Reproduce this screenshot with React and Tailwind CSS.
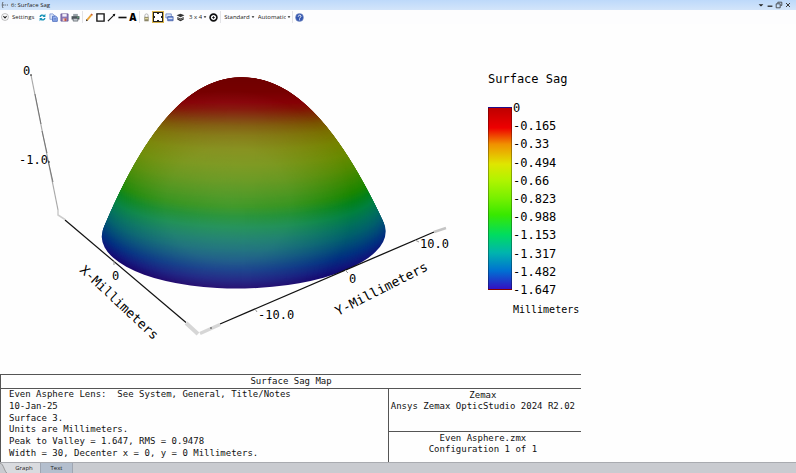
import React from "react";

const MONO = "font-['DejaVu_Sans_Mono','Liberation_Mono',monospace]";

// Colour down the front of the dome, keyed by the height at its centre line.
const RAMP = [
  [76, [110, 0, 0]],
  [92, [118, 0, 0]],
  [103, [134, 0, 6]],
  [110, [130, 18, 4]],
  [118, [124, 50, 4]],
  [126, [122, 82, 0]],
  [136, [122, 110, 0]],
  [150, [118, 130, 0]],
  [165, [106, 138, 0]],
  [180, [84, 138, 0]],
  [195, [54, 136, 0]],
  [207, [28, 134, 0]],
  [217, [4, 130, 26]],
  [228, [0, 128, 64]],
  [240, [0, 112, 92]],
  [250, [0, 96, 108]],
  [260, [0, 74, 120]],
  [270, [2, 48, 128]],
  [280, [16, 24, 124]],
  [290, [26, 0, 104]],
];

function rampColor(y) {
  const i = Math.max(1, RAMP.findIndex(([stop]) => stop >= y));
  const [y0, a] = RAMP[i - 1];
  const [y1, b] = RAMP[i];
  const k = (y - y0) / (y1 - y0);
  return `rgb(${a.map((v, n) => Math.round(v + (b[n] - v) * k)).join(",")})`;
}

// Rings of the surface; their union is the silhouette of the dome.
const RINGS = Array.from({ length: 120 }, (_, i) => {
  const t = 1 - i / 120;
  const r = Math.pow(t, 1 / 2.16);
  return { cy: 83.5 + 150.5 * t, rx: 142 * r, ry: 54.5 * r };
});

// Lines of equal sag: nearly level at the top, bowed like the rim at the base.
const BANDS = Array.from({ length: 212 }, (_, i) => {
  const y = 289 - i;
  const drop = 54 * Math.pow(Math.max(0, y - 96) / 193, 1.2);
  const edge = y - drop;
  const t = Math.max(0.1, Math.min(1, (edge - 73) / 151));
  const half = 146 * Math.sqrt(Math.max(0.02, Math.pow(t, 0.93) - 0.032)) + 4;
  const x0 = 243.7 - half;
  const x1 = 243.7 + half;
  return {
    d: `M0 60V${edge}H${x0}A${half} ${drop + 0.01} 0 0 0 ${x1} ${edge}H480V60Z`,
    fill: rampColor(y),
  };
});

const LEVELS = ["0", "-0.165", "-0.33", "-0.494", "-0.66", "-0.823", "-0.988", "-1.153", "-1.317", "-1.482", "-1.647"];

const NOTES = [
  "Even Asphere Lens:  See System, General, Title/Notes",
  "10-Jan-25",
  "Surface 3.",
  "Units are Millimeters.",
  "Peak to Valley = 1.647, RMS = 0.9478",
  "Width = 30, Decenter x = 0, y = 0 Millimeters.",
];

function Icon({ children, size = 10 }) {
  return (
    <svg width={size} height={size} viewBox="0 0 10 10" fill="none" aria-hidden="true">
      {children}
    </svg>
  );
}

function ToolButton({ label, children, active }) {
  return (
    <button
      type="button"
      aria-label={label}
      className={
        active
          ? "flex h-3 w-3 items-center justify-center border border-[#d9b44a] bg-[#fde9a8]"
          : "flex h-3 w-[11px] items-center justify-center"
      }
    >
      {children}
    </button>
  );
}

function Separator() {
  return <span className="mx-px h-3 w-px bg-[#e3e3e6]" />;
}

function Dropdown({ label, value }) {
  return (
    <label className="flex items-center gap-px">
      <select
        aria-label={label}
        defaultValue={value}
        className="appearance-none bg-transparent p-0 text-[6px] leading-3 [field-sizing:content]"
      >
        <option>{value}</option>
      </select>
      <svg width="4" height="4" viewBox="0 0 4 4" aria-hidden="true">
        <path d="M0.6 1.2h2.8L2 3z" fill="#222" />
      </svg>
    </label>
  );
}

function TitleBar() {
  return (
    <header className="flex h-[10px] items-center justify-between bg-linear-to-b from-[#bdd9fa] to-[#d3e5fa] pl-px pr-1">
      <div className="flex items-center gap-[2px]">
        <svg width="8" height="8" viewBox="0 0 8 8" fill="none" stroke="#444" strokeWidth="0.8" aria-hidden="true">
          <path d="M2 1C1 3 1 5 2 7M2 4h1.5M4.2 4h1M6 4h1" />
        </svg>
        <h1 className="text-[6px] leading-[10px] text-[#222]">6: Surface Sag</h1>
      </div>
      <div className="flex items-center">
        <button type="button" aria-label="Window menu" className="w-[9px]">
          <Icon size={8}><path d="M2 4h6L5 7z" fill="#222" /></Icon>
        </button>
        <button type="button" aria-label="Minimize" className="w-[9px]">
          <Icon size={8}><path d="M2 6.5h6" stroke="#222" strokeWidth="1.6" /></Icon>
        </button>
        <button type="button" aria-label="Restore" className="w-[9px]">
          <Icon size={8}><path d="M3.5 3V1.5h5v4H7M1.5 3.5h5v5h-5z" stroke="#333" strokeWidth="1" /></Icon>
        </button>
        <button type="button" aria-label="Close" className="w-2">
          <Icon size={8}><path d="M2.500 2.500l5 5M7.500 2.500L2.500 7.500" stroke="#333" strokeWidth="1.2" /></Icon>
        </button>
      </div>
    </header>
  );
}

function Toolbar() {
  return (
    <div className="flex h-[14px] items-center bg-[#fdfdfe] pl-px text-[6px] text-[#222]">
      <button type="button" className="flex w-[36px] items-center gap-[3px]">
        <Icon size={8}>
          <circle cx="5" cy="5" r="4.3" stroke="#999" strokeWidth="0.8" />
          <path d="M3 4l2 2.2L7 4" stroke="#222" strokeWidth="1.3" />
        </Icon>
        Settings
      </button>
      <ToolButton label="Refresh">
        <Icon size={9}>
          <path d="M2.400 4.400C2.600 2.400 5 1.800 6.600 3M7.600 5.600C7.400 7.600 5 8.200 3.400 7" stroke="#1793b8" strokeWidth="1.6" />
          <path d="M8.2 0.8v3.7H5zM1.8 9.2V5.5H5z" fill="#1793b8" />
        </Icon>
      </ToolButton>
      <ToolButton label="Copy">
        <Icon size={9}>
          <path d="M1 1h3.4L6 2.6V7H1z" fill="#dce6fa" stroke="#6a86cc" strokeWidth="0.8" />
          <path d="M4 3.5h3.4L9.2 5v4.3H4z" fill="#9db6ee" stroke="#3b5fb8" strokeWidth="0.9" />
          <path d="M5.2 6h2.8M5.2 7.6h2.8" stroke="#3b5fb8" strokeWidth="0.6" />
        </Icon>
      </ToolButton>
      <ToolButton label="Save">
        <Icon size={9}>
          <path d="M1 1h8v8H1z" fill="#8a78b8" stroke="#5c4c90" strokeWidth="0.8" />
          <path d="M2.6 1.2h4.8V4H2.6z" fill="#f4f1fb" />
          <path d="M3 6h4v3H3z" fill="#f1c9c0" />
          <path d="M5 6h2v3H5z" fill="#c65340" />
        </Icon>
      </ToolButton>
      <ToolButton label="Print">
        <Icon size={9}>
          <path d="M2.4 1h5.2v3H2.4z" fill="#9aa3aa" />
          <path d="M0.6 3.5h8.8v3.7H0.6z" fill="#4d555c" />
          <path d="M2.4 6h5.2v3H2.4z" fill="#c2c8cc" stroke="#4d555c" strokeWidth="0.7" />
          <path d="M7 4.2h1.4v1H7z" fill="#63cf83" />
        </Icon>
      </ToolButton>
      <Separator />
      <ToolButton label="Annotate">
        <Icon size={9}>
          <path d="M2 8.2L7.6 1.6" stroke="#e8a33a" strokeWidth="2" />
          <path d="M1 9.2l0.5-2.2 1.6 1.3z" fill="#222" />
          <path d="M7.2 2.2L8 1.2" stroke="#c7583a" strokeWidth="2" />
        </Icon>
      </ToolButton>
      <ToolButton label="Rectangle">
        <Icon size={9}><path d="M1 1h8v8H1z" stroke="#111" strokeWidth="1.5" /></Icon>
      </ToolButton>
      <ToolButton label="Arrow">
        <Icon size={9}>
          <path d="M1 9L8 2" stroke="#111" strokeWidth="1.2" />
          <path d="M9.2 0.8L8.6 3.8 6.2 1.4z" fill="#111" />
        </Icon>
      </ToolButton>
      <ToolButton label="Line">
        <Icon size={9}><path d="M0.5 5h9" stroke="#111" strokeWidth="1.8" /></Icon>
      </ToolButton>
      <button type="button" aria-label="Text" className="h-3 w-[10px] text-center text-[10px] font-extrabold leading-3 text-black">
        A
      </button>
      <Separator />
      <ToolButton label="Lock">
        <Icon size={9}>
          <path d="M3.2 4.5V2.8a1.8 1.8 0 013.6 0v1.7" stroke="#aaa" strokeWidth="1" />
          <path d="M2.6 4.3h4.8v4.9H2.6z" fill="#8a8567" />
          <path d="M3.4 5.4h3.2v1.600H3.4z" fill="#e3da9e" />
        </Icon>
      </ToolButton>
      <ToolButton label="Fit to window" active>
        <Icon size={10}>
          <path d="M0 0h10v10H0z" fill="#222" />
          <path d="M1 1h8v8H1z" fill="#fff" />
          <path d="M4 1h2v1H4zM4 8h2v1H4zM1 4h1v2H1zM8 4h1v2H8z" fill="#222" />
        </Icon>
      </ToolButton>
      <ToolButton label="Windows">
        <Icon size={9}>
          <path d="M1 1h6v4.5H1z" fill="#dce7fb" stroke="#5573b8" strokeWidth="0.8" />
          <path d="M3 4h6v4.6H3z" fill="#6f8fdc" stroke="#3b569e" strokeWidth="0.8" />
          <path d="M3.6 6h4.8" stroke="#fff" strokeWidth="0.9" />
        </Icon>
      </ToolButton>
      <ToolButton label="Layers">
        <Icon size={9}>
          <path d="M5 0.8l4.4 1.8L5 4.6 0.6 2.6z" fill="#333" />
          <path d="M1.4 4.4v2.8L5 9.2l3.6-2V4.4L5 6z" fill="#222" />
          <path d="M1.4 5.6L5 7.4l3.6-1.8" stroke="#fff" strokeWidth="0.5" />
        </Icon>
      </ToolButton>
      <span className="w-[3px]" />
      <Dropdown label="Grid" value="3 x 4" />
      <span className="w-px" />
      <ToolButton label="Target">
        <Icon size={9}>
          <circle cx="5" cy="5" r="3.8" stroke="#111" strokeWidth="1.8" />
          <path d="M3.600 5h2.800M5 3.600v2.800" stroke="#111" strokeWidth="1" />
        </Icon>
      </ToolButton>
      <Separator />
      <span className="w-[2px]" />
      <Dropdown label="View" value="Standard" />
      <span className="w-[3px]" />
      <Dropdown label="Update" value="Automatic" />
      <Separator />
      <ToolButton label="Help">
        <Icon size={9}>
          <circle cx="5" cy="5" r="4.4" fill="#3557b0" stroke="#8294c4" strokeWidth="0.6" />
          <path d="M3.6 4c0-2 3-2 3-0.2C6.600 5 5.100 4.900 5.100 6.200M5.100 7v1.100" stroke="#fff" strokeWidth="1.1" />
        </Icon>
      </ToolButton>
    </div>
  );
}

function SagPlot() {
  return (
    <svg width="480" height="350" viewBox="0 24 480 350" role="img" aria-label="Surface sag plot" className={`shrink-0 text-[12px] ${MONO}`}>
      <defs>
        <radialGradient id="sheen" gradientUnits="userSpaceOnUse" cx="0" cy="0" r="1" gradientTransform="translate(228 205) scale(125 115)">
          <stop offset="0" stopColor="#fff" stopOpacity="0.17" />
          <stop offset="0.5" stopColor="#fff" stopOpacity="0.13" />
          <stop offset="1" stopColor="#fff" stopOpacity="0" />
        </radialGradient>
        <clipPath id="dome">
          {RINGS.map((ring) => (
            <ellipse key={ring.cy} cx="243.7" cy={ring.cy} rx={ring.rx} ry={ring.ry} transform="rotate(-1.2 243.7 234)" />
          ))}
        </clipPath>
      </defs>
      <g clipPath="url(#dome)">
        <rect x="90" y="60" width="310" height="240" fill="#1a0068" />
        {BANDS.map((band) => (
          <path key={band.d} d={band.d} fill={band.fill} />
        ))}
        <rect x="90" y="60" width="310" height="240" fill="url(#sheen)" />
      </g>

      <path d="M31 75L58 210" stroke="#aaa" strokeWidth="1.2" fill="none" />
      <path d="M35 94l6 30M42 131l5 22M48 160l5 22" stroke="#666" strokeWidth="0.8" fill="none" />
      <path d="M58 210v5l7 4.500" stroke="#ccc" strokeWidth="1.5" fill="none" />
      <path d="M30 75h2M48 162h2" stroke="#222" />

      <path d="M65 220L186 322.500" stroke="#111" strokeWidth="1.2" />
      <path d="M186 323l12 11" stroke="#d6d6d6" strokeWidth="4" />
      <path d="M200 333.500l20-9" stroke="#d6d6d6" strokeWidth="3.5" />
      <path d="M210 328h2" stroke="#444" />
      <path d="M220 324L434 232" stroke="#111" strokeWidth="1.3" />
      <path d="M434 232l12-4" stroke="#c4c4c4" strokeWidth="2.5" />
      <path d="M114 261v4M255 309l2 3M345 270l3 3M415 240l4 2" stroke="#999" />

      <text x="23" y="75">0</text>
      <text x="19" y="164">-1.0</text>
      <text x="112" y="280">0</text>
      <text x="258" y="319">-10.0</text>
      <text x="349" y="283">0</text>
      <text x="420" y="248">10.0</text>
      <text transform="translate(79 271) rotate(43)" className="text-[13px]">X-Millimeters</text>
      <text transform="translate(338 316) rotate(-27)" className="text-[13px]">Y-Millimeters</text>
    </svg>
  );
}

function Legend() {
  return (
    <section className={`flex flex-col pl-2 pt-[47px] text-[12px] text-black ${MONO}`}>
      <h2 className="leading-4">Surface Sag</h2>
      <div className="mt-[12px] flex gap-px">
        <div className="mt-2 h-[183px] w-6 border border-black/30 bg-[linear-gradient(to_bottom,#be0000_0%,#ee0000_11%,#f09000_20%,#dfe600_31%,#b0f400_40%,#76f000_50%,#38e800_59%,#00dc60_70%,#00b4ae_80%,#0070d2_90%,#3410c4_100%)]" />
        <ul className="flex h-[200px] flex-col justify-between">
          {LEVELS.map((level) => (
            <li key={level} className="leading-[18px]">{level}</li>
          ))}
        </ul>
      </div>
      <p className="mt-[3px] pl-[25px] text-[10px] leading-4">Millimeters</p>
    </section>
  );
}

function InfoPanel() {
  return (
    <section className={`w-[73%] border-t border-l border-[#555] text-[9px] leading-[11px] text-[#111] ${MONO}`}>
      <h2 className="border-b border-[#555] py-px text-center">Surface Sag Map</h2>
      <div className="grid grid-cols-[2fr_1fr]">
        <div className="flex flex-col justify-between whitespace-pre pb-[3px] pl-2">
          {NOTES.map((line) => (
            <p key={line}>{line}</p>
          ))}
        </div>
        <div className="border-l border-[#555] text-center">
          <div className="h-[43px] whitespace-nowrap border-b border-[#555] pr-1 pt-px">
            <p>Zemax</p>
            <p>Ansys Zemax OpticStudio 2024 R2.02</p>
          </div>
          <div className="h-[30px] pr-1 pt-px">
            <p>Even Asphere.zmx</p>
            <p>Configuration 1 of 1</p>
          </div>
        </div>
      </div>
    </section>
  );
}

export default function App() {
  return (
    <div className="flex min-h-screen flex-col bg-[#fefefe] font-['Open_Sans','Noto_Sans',sans-serif]">
      <TitleBar />
      <Toolbar />
      <main className="flex flex-1 flex-col justify-between">
        <div className="flex">
          <SagPlot />
          <Legend />
        </div>
        <InfoPanel />
      </main>
      <nav className="flex h-3 items-stretch border-t border-[#a9abb0] bg-[#c9cbd0] text-[6px] leading-[11px] text-[#222]">
        <svg width="8" height="11" viewBox="0 0 8 11" aria-hidden="true">
          <path d="M0 0c4 1 4 9 8 11V0z" fill="#d9dbdf" />
          <path d="M0 0c4 1 4 9 8 11" fill="none" stroke="#888" strokeWidth="0.8" />
        </svg>
        <button type="button" className="w-8 bg-[#d9dbdf]">Graph</button>
        <button type="button" className="w-[33px] border-x border-[#9fa6b2] bg-[#b4bfce]">Text</button>
      </nav>
    </div>
  );
}
